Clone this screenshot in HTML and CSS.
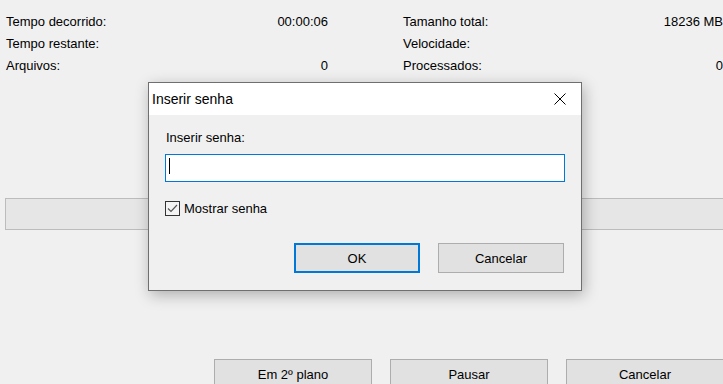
FILE: index.html
```html
<!DOCTYPE html>
<html lang="pt-BR">
<head>
    <meta charset="UTF-8">
    <meta name="viewport" content="width=device-width, initial-scale=1.0">
    <title>Inserir senha</title>
    <link rel="stylesheet" href="styles.css">
</head>
<body>
    <div class="window">
        <div class="stats">
            <div class="stat-col">
                <div class="stat-row"><span>Tempo decorrido:</span><span>00:00:06</span></div>
                <div class="stat-row"><span>Tempo restante:</span><span></span></div>
                <div class="stat-row"><span>Arquivos:</span><span>0</span></div>
            </div>
            <div class="stat-col stat-col-right">
                <div class="stat-row"><span>Tamanho total:</span><span>18236 MB</span></div>
                <div class="stat-row"><span>Velocidade:</span><span></span></div>
                <div class="stat-row"><span>Processados:</span><span>0</span></div>
            </div>
        </div>

        <div class="progress"></div>

        <div class="actions">
            <button class="btn btn-wide">Em 2º plano</button>
            <button class="btn btn-wide">Pausar</button>
            <button class="btn btn-wide">Cancelar</button>
        </div>
    </div>

    <!-- dialogo modal por cima da janela -->
    <div class="dialog">
        <div class="dialog-title">
            <span>Inserir senha</span>
            <svg class="close-icon" width="12" height="12" viewBox="0 0 12 12">
                <path d="M0.5 0.5 L11.5 11.5 M11.5 0.5 L0.5 11.5" stroke="#000" stroke-width="1" fill="none"/>
            </svg>
        </div>
        <div class="dialog-body">
            <label class="field-label">Inserir senha:</label>
            <div class="text-input"><span class="caret"></span></div>
            <div class="check-row">
                <span class="checkbox">
                    <svg width="13" height="13" viewBox="0 0 13 13">
                        <path d="M2 6.5 L5 9.5 L11 3" stroke="#555" stroke-width="1.2" fill="none"/>
                    </svg>
                </span>
                <span>Mostrar senha</span>
            </div>
            <div class="dialog-buttons">
                <button class="btn btn-dialog btn-default">OK</button>
                <button class="btn btn-dialog">Cancelar</button>
            </div>
        </div>
    </div>
</body>
</html>
```

FILE: styles.css
```css
body {
    margin: 0;
    background-color: #f0f0f0;
    font-family: 'Liberation Sans', Arial, sans-serif;
    font-size: 13px;
    color: #000;
    overflow: hidden;
}

.window {
    width: 723px;
    height: 384px;
    padding-top: 11px;
    box-sizing: border-box;
}

.stats {
    display: flex;
}

.stat-col {
    width: 325px;
    padding-left: 6px;
}

.stat-col-right {
    width: 323px;
    margin-left: 69px;
}

.stat-row {
    display: flex;
    justify-content: space-between;
    height: 22px;
    line-height: 22px;
}

.progress {
    margin: 121px 0 0 5px;
    height: 30px;
    background-color: #e6e6e6;
    border: 1px solid #bcbcbc;
    border-right: none;
}

.actions {
    display: flex;
    gap: 18px;
    margin: 129px 0 0 214px;
}

.btn {
    font-family: 'Liberation Sans', Arial, sans-serif;
    font-size: 13px;
    color: #000;
    background-color: #e1e1e1;
    border: 1px solid #adadad;
    padding: 0;
    box-sizing: border-box;
}

.btn-wide {
    width: 158px;
    height: 30px;
    flex-shrink: 0;
}

.dialog {
    position: absolute;
    left: 148px;
    top: 82px;
    width: 434px;
    height: 209px;
    box-sizing: border-box;
    border: 1px solid #6f6f6f;
    background-color: #f0f0f0;
    box-shadow: 2px 4px 14px rgba(0, 0, 0, 0.28);
    display: flex;
    flex-direction: column;
}

.dialog-title {
    height: 32px;
    background-color: #fff;
    display: flex;
    align-items: center;
    justify-content: space-between;
    padding: 0 15px 0 3px;
    font-size: 14px;
}

.close-icon {
    display: block;
}

.dialog-body {
    padding: 14px 16px 0 16px;
}

.field-label {
    display: block;
    height: 18px;
    line-height: 18px;
    padding-left: 1px;
}

.text-input {
    margin-top: 7px;
    width: 400px;
    height: 28px;
    box-sizing: border-box;
    border: 1px solid #0078d7;
    background-color: #fff;
    padding: 3px 0 0 3px;
}

.caret {
    display: block;
    width: 1px;
    height: 16px;
    background-color: #000;
}

.check-row {
    display: flex;
    align-items: center;
    gap: 4px;
    margin-top: 18px;
    height: 16px;
}

.checkbox {
    width: 15px;
    height: 15px;
    box-sizing: border-box;
    border: 1px solid #333;
    background-color: #f4f4f4;
    display: flex;
    align-items: center;
    justify-content: center;
}

.dialog-buttons {
    display: flex;
    justify-content: flex-end;
    gap: 18px;
    margin-top: 27px;
    padding-right: 1px;
}

.btn-dialog {
    width: 126px;
    height: 30px;
}

.btn-default {
    border: 2px solid #0078d7;
}
```
